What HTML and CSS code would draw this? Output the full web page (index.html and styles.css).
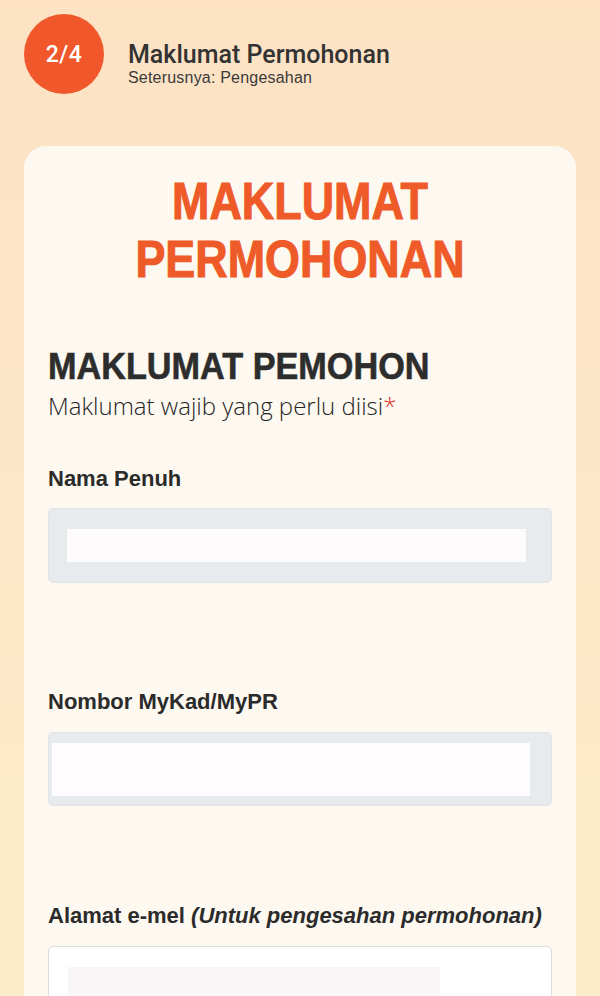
FILE: index.html
```html
<!DOCTYPE html>
<html lang="ms">
<head>
<meta charset="utf-8">
<title>Maklumat Permohonan</title>
<link rel="stylesheet" href="styles.css">
</head>
<body>
<header class="step">
  <div class="step-badge">2/4</div>
  <div class="step-text">
    <div class="step-title">Maklumat Permohonan</div>
    <div class="step-next">Seterusnya: Pengesahan</div>
  </div>
</header>
<main class="card">
  <h1 class="page-title"><span class="title-line">MAKLUMAT</span><span class="title-line">PERMOHONAN</span></h1>
  <h2 class="section-title">MAKLUMAT PEMOHON</h2>
  <p class="section-note">Maklumat wajib yang perlu diisi<span class="req">*</span></p>

  <div class="field field-name">
    <label class="field-label">Nama Penuh</label>
    <div class="input input-filled"><div class="mask mask-name"></div></div>
  </div>

  <div class="field field-ic">
    <label class="field-label">Nombor MyKad/MyPR</label>
    <div class="input input-filled"><div class="mask mask-ic"></div></div>
  </div>

  <div class="field field-email">
    <label class="field-label">Alamat e-mel <em>(Untuk pengesahan permohonan)</em></label>
    <div class="input input-empty"><div class="mask mask-email"></div></div>
  </div>
</main>
</body>
</html>
```
FILE: styles.css
```css
* { box-sizing: border-box; }
html, body { margin: 0; padding: 0; }
body {
  width: 600px;
  height: 996px;
  overflow: hidden;
  background: linear-gradient(180deg, #fde2c4 0%, #fde7c8 50%, #fdecc9 100%);
  font-family: "Liberation Sans", Arial, sans-serif;
  color: #2e2e2e;
}
.step {
  display: flex;
  align-items: flex-start;
  gap: 24px;
  padding: 14px 24px 0;
}
.step-badge {
  flex: none;
  width: 80px;
  height: 80px;
  border-radius: 50%;
  background: #f0582b;
  color: #fff;
  display: flex;
  align-items: center;
  justify-content: center;
  font-family: "Roboto", "Liberation Sans", sans-serif;
  font-weight: 500;
  font-size: 23px;
  letter-spacing: 0.5px;
}
.step-text {
  display: flex;
  flex-direction: column;
  margin-top: 27px;
}
.step-title {
  font-family: "Roboto", "Liberation Sans", sans-serif;
  font-weight: 500;
  font-size: 25px;
  line-height: 28px;
  color: #333;
}
.step-next {
  font-family: "Liberation Sans", Arial, sans-serif;
  font-size: 16px;
  line-height: 18px;
  letter-spacing: 0.2px;
  color: #3a3a3a;
}
.card {
  margin: 52px 24px 0;
  background: #fef9f0;
  border-radius: 22px;
  padding: 27px 24px 40px;
  min-height: 900px;
}
.page-title {
  margin: 0;
  text-align: center;
  font-family: "Liberation Sans", Arial, sans-serif;
  font-weight: 700;
  font-size: 51px;
  line-height: 57.5px;
  color: #ee5a28;
  -webkit-text-stroke: 1px #ee5a28;
}
.title-line {
  display: block;
  transform: scaleX(0.88);
  transform-origin: center;
}
.section-title {
  margin: 57px 0 0;
  font-family: "Liberation Sans", Arial, sans-serif;
  font-weight: 700;
  font-size: 37px;
  line-height: 44px;
  color: #2d2d2d;
  -webkit-text-stroke: 0.6px #2d2d2d;
  white-space: nowrap;
  transform: scaleX(0.925);
  transform-origin: left center;
}
.section-note {
  margin: 2px 0 0;
  font-family: "Open Sans", "Liberation Sans", sans-serif;
  font-weight: 300;
  font-size: 24px;
  line-height: 30px;
  color: #262626;
}
.req { color: #e0302a; }
.field { display: flex; flex-direction: column; }
.field-label {
  font-family: "Liberation Sans", Arial, sans-serif;
  font-weight: 700;
  font-size: 22px;
  line-height: 26px;
  color: #2b2b2b;
}
.field-label em { font-style: italic; }
.field-name { margin-top: 45px; }
.field-ic { margin-top: 106px; }
.field-email { margin-top: 97px; }
.field-name .input { margin-top: 16px; height: 75px; }
.field-ic .input { margin-top: 17px; height: 74px; }
.field-email .input { margin-top: 17px; height: 80px; }
.input {
  border-radius: 5px;
  position: relative;
}
.input-filled {
  background: #e8ebee;
  border: 1px solid #e2e5e8;
}
.input-empty {
  background: #fff;
  border: 1px solid #dedede;
}
.mask { position: absolute; }
.mask-name { left: 18px; right: 25px; top: 20px; bottom: 20px; background: #fdfbfb; }
.mask-ic { left: 3px; right: 21px; top: 10px; bottom: 9px; background: #fefcfc; }
.mask-email { left: 19px; width: 372px; top: 20px; bottom: 0; background: #f8f6f6; }
```
